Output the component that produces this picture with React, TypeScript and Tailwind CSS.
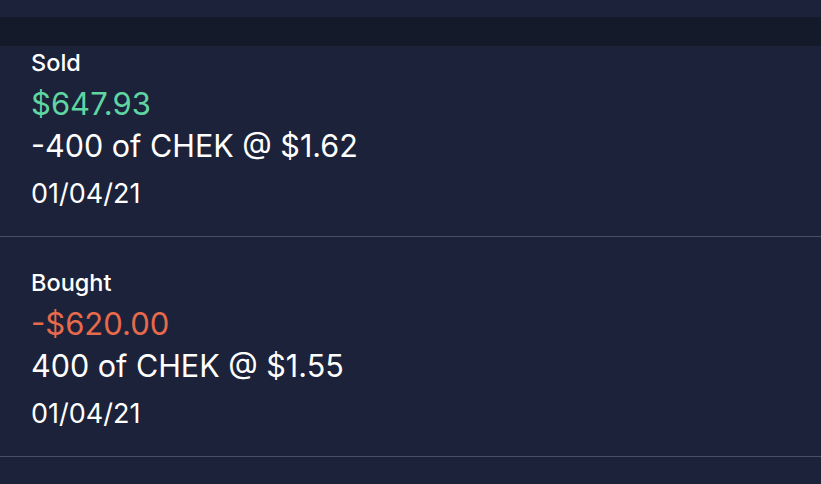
import React from 'react';

interface Trade {
  side: string;
  amount: string;
  positive: boolean;
  detail: string;
  date: string;
}

const trades: Trade[] = [
  { side: 'Sold', amount: '$647.93', positive: true, detail: '-400 of CHEK @ $1.62', date: '01/04/21' },
  { side: 'Bought', amount: '-$620.00', positive: false, detail: '400 of CHEK @ $1.55', date: '01/04/21' },
];

function TradeRow({ trade, first }: { trade: Trade; first: boolean }) {
  return (
    <div className={`${first ? 'pt-[4px]' : 'pt-[33px]'} pb-[27px] pl-[31px] border-b-[1.5px] border-[#4a5064]`}>
      <div className="text-[23.5px] leading-[26px] font-medium text-white">{trade.side}</div>
      <div
        className={`mt-[11px] text-[31px] leading-[34px] ${trade.positive ? 'text-[#5fd5a2]' : 'text-[#e66a4b]'}`}
      >
        {trade.amount}
      </div>
      <div className="mt-[8px] text-[30.5px] leading-[34px] text-white">{trade.detail}</div>
      <div className="mt-[16px] text-[27px] leading-[30px] text-white">{trade.date}</div>
    </div>
  );
}

export default function App() {
  return (
    <div className="w-[821px] h-[484px] overflow-hidden bg-[#1c2239] font-['Inter',sans-serif]">
      <div className="h-[17px]" />
      <div className="h-[29px] bg-[#151a2b]" />
      {trades.map((t, i) => (
        <TradeRow key={i} trade={t} first={i === 0} />
      ))}
    </div>
  );
}
